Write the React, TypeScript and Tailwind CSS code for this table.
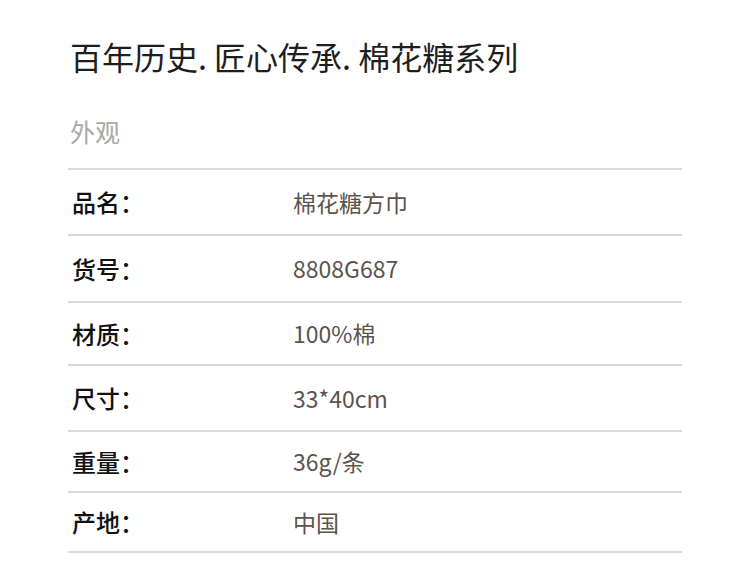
const rows = [
  { label: '品名：', value: '棉花糖方巾', h: 'h-[66px]' },
  { label: '货号：', value: '8808G687', h: 'h-[67px]' },
  { label: '材质：', value: '100%棉', h: 'h-[63px]' },
  { label: '尺寸：', value: '33*40cm', h: 'h-[66px]' },
  { label: '重量：', value: '36g/条', h: 'h-[61px]' },
  { label: '产地：', value: '中国', h: 'h-[60px]' },
]

export default function App() {
  return (
    <div
      className="w-[750px] h-[566px] bg-white overflow-hidden px-[68px] pt-[35px]"
      style={{ fontFamily: '"Noto Sans CJK SC", "Noto Sans", sans-serif' }}
    >
      <h1 className="text-[32px] leading-[42px] text-[#1e1e1e] pl-[2px]">
        百年历史. 匠心传承. 棉花糖系列
      </h1>
      <p className="mt-[38px] text-[25px] leading-[32px] text-[#a8a8a8] pl-[2px]">外观</p>
      <div className="mt-[21px] w-[614px] border-t-2 border-[#dcdcd7]">
        {rows.map((r) => (
          <div key={r.label} className={`flex items-center border-b-2 border-[#dcdcd7] ${r.h}`}>
            <span className="w-[225px] pl-[4px] text-[24px] font-medium text-[#111]">{r.label}</span>
            <span className="text-[23px] text-[#5b544d]">{r.value}</span>
          </div>
        ))}
      </div>
    </div>
  )
}
